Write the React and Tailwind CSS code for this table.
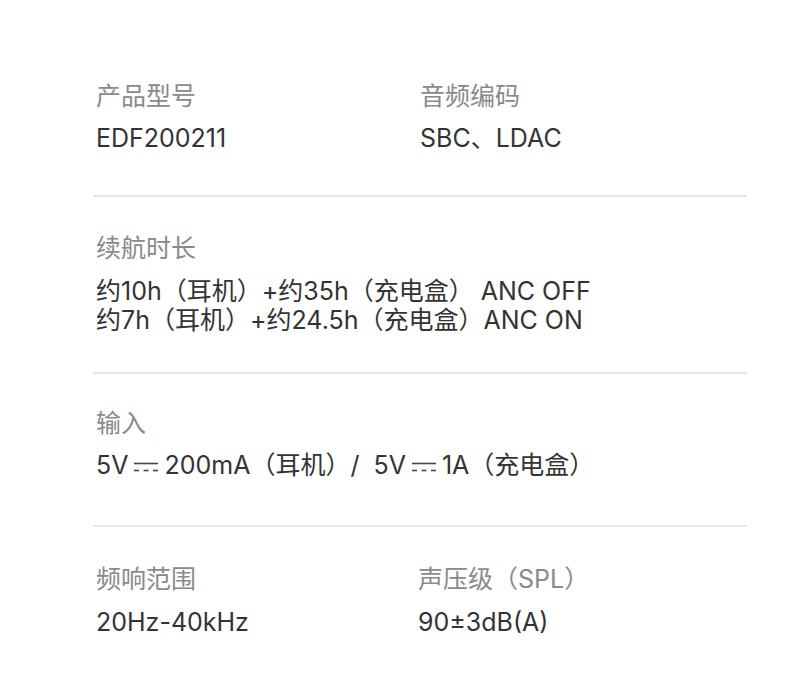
import React from "react";

const font = { fontFamily: 'Inter, "Noto Sans CJK SC", sans-serif' };

function DC() {
  return (
    <svg width="26" height="12" viewBox="0 0 26 12" className="inline-block ml-[5px] mr-[5px] align-middle" aria-hidden="true">
      <line x1="1" y1="2.5" x2="25" y2="2.5" stroke="#444" strokeWidth="1.6" />
      <line x1="1" y1="9.5" x2="6" y2="9.5" stroke="#444" strokeWidth="1.6" />
      <line x1="10.5" y1="9.5" x2="15.5" y2="9.5" stroke="#444" strokeWidth="1.6" />
      <line x1="20" y1="9.5" x2="25" y2="9.5" stroke="#444" strokeWidth="1.6" />
    </svg>
  );
}

function Label({ children }) {
  return <div className="text-[25px] leading-[32px] text-[#8a8a8a]">{children}</div>;
}
function Value({ children, mt = "mt-[10px]" }) {
  return <div className={`text-[25px] leading-[32px] text-[#333333] ${mt}`}>{children}</div>;
}

export default function App() {
  return (
    <div className="w-[790px] h-[699px] bg-white" style={font}>
      <div className="pl-[93px] w-[747px] pt-[80px]">
        <div className="flex pl-[3px] pb-[41px]">
          <div className="w-[324px]">
            <Label>产品型号</Label>
            <Value>EDF200211</Value>
          </div>
          <div>
            <Label>音频编码</Label>
            <Value>SBC、LDAC</Value>
          </div>
        </div>
        <div className="h-[2px] bg-[#e6e6e6]" />
        <div className="pl-[3px] pt-[35px] pb-[37px]">
          <Label>续航时长</Label>
          <div className="text-[25px] leading-[29px] text-[#333333] mt-[13px]">
            <div>约10h（耳机）+约35h（充电盒） ANC OFF</div>
            <div>约7h（耳机）+约24.5h（充电盒）ANC ON</div>
          </div>
        </div>
        <div className="h-[2px] bg-[#e6e6e6]" />
        <div className="pl-[3px] pt-[33px] pb-[44px]">
          <Label>输入</Label>
          <Value>
            5V<DC />200mA（耳机）/ &nbsp;5V<DC />1A（充电盒）
          </Value>
        </div>
        <div className="h-[2px] bg-[#e6e6e6]" />
        <div className="flex pl-[3px] pt-[36px]">
          <div className="w-[322px]">
            <Label>频响范围</Label>
            <Value mt="mt-[11px]">20Hz-40kHz</Value>
          </div>
          <div>
            <Label>声压级（SPL）</Label>
            <Value mt="mt-[11px]">90±3dB(A)</Value>
          </div>
        </div>
      </div>
    </div>
  );
}
